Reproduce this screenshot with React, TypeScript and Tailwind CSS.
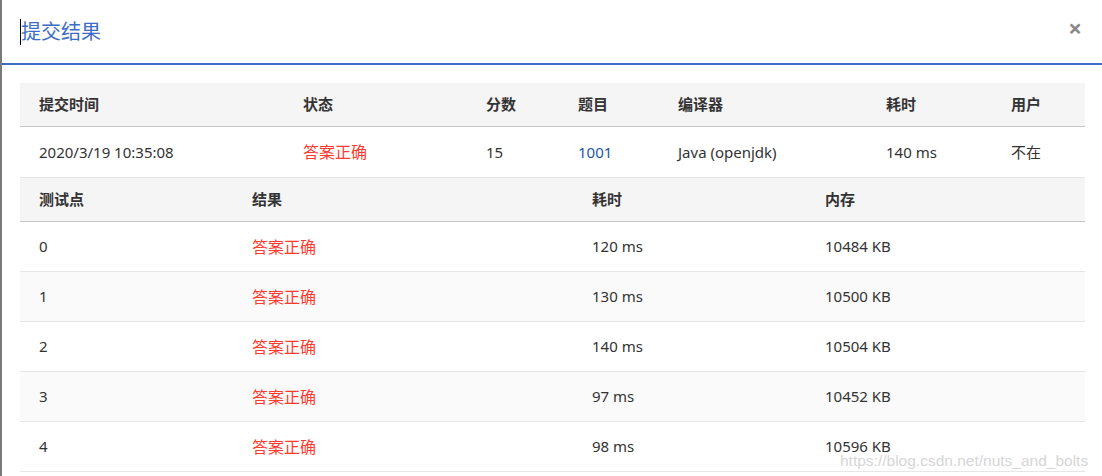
import React from 'react';

const font = { fontFamily: '"Noto Sans", "Noto Sans CJK SC", sans-serif' };

export default function App() {
  const cases = [
    { id: 0, time: '120 ms', mem: '10484 KB' },
    { id: 1, time: '130 ms', mem: '10500 KB' },
    { id: 2, time: '140 ms', mem: '10504 KB' },
    { id: 3, time: '97 ms', mem: '10452 KB' },
    { id: 4, time: '98 ms', mem: '10596 KB' },
  ];

  const outerCols = 'grid grid-cols-[264px_183px_92px_100px_208px_125px_1fr]';
  const innerCols = 'grid grid-cols-[213px_340px_233px_1fr]';

  return (
    <div className="relative w-[1102px] h-[476px] bg-white overflow-hidden border-l-2 border-[#7a7a7a] text-[15px] text-[#333]" style={font}>
      {/* Modal header */}
      <div className="h-[65px] flex items-center justify-between pl-[18px] pr-[20px] border-b-2 border-[#3d6cc4]">
        <div className="flex items-center">
          <span className="w-px h-[26px] bg-black" />
          <h2 className="text-[20px] text-[#3d6cc4] leading-none">提交结果</h2>
        </div>
        <span className="text-[24px] leading-none font-bold text-[#888] -mt-[8px]">×</span>
      </div>

      <div className="pl-[18px] pr-[17px] pt-[18px]">
        {/* Submission row */}
        <div className={`${outerCols} h-[44px] items-center bg-[#f5f5f5] border-b border-[#c6c6c6] font-bold`}>
          <div className="pl-[19px]">提交时间</div>
          <div className="pl-[19px]">状态</div>
          <div className="pl-[19px]">分数</div>
          <div className="pl-[19px]">题目</div>
          <div className="pl-[19px]">编译器</div>
          <div className="pl-[19px]">耗时</div>
          <div className="pl-[19px]">用户</div>
        </div>
        <div className={`${outerCols} h-[51px] items-center border-b border-[#e6e6e6]`}>
          <div className="pl-[19px]">2020/3/19 10:35:08</div>
          <div className="pl-[19px] text-[16px] text-[#ff3b30]">答案正确</div>
          <div className="pl-[19px]">15</div>
          <div className="pl-[19px] text-[#1a5aa6]">1001</div>
          <div className="pl-[19px]">Java (openjdk)</div>
          <div className="pl-[19px]">140 ms</div>
          <div className="pl-[19px]">不在</div>
        </div>

        {/* Test cases */}
        <div className={`${innerCols} h-[44px] items-center bg-[#f5f5f5] border-b border-[#c6c6c6] font-bold`}>
          <div className="pl-[19px]">测试点</div>
          <div className="pl-[19px]">结果</div>
          <div className="pl-[19px]">耗时</div>
          <div className="pl-[19px]">内存</div>
        </div>
        {cases.map((c) => (
          <div
            key={c.id}
            className={`${innerCols} h-[50px] items-center border-b border-[#e6e6e6] ${c.id % 2 === 1 ? 'bg-[#fafafa]' : 'bg-white'}`}
          >
            <div className="pl-[19px]">{c.id}</div>
            <div className="pl-[19px] text-[16px] text-[#ff3b30]">答案正确</div>
            <div className="pl-[19px]">{c.time}</div>
            <div className="pl-[19px]">{c.mem}</div>
          </div>
        ))}
      </div>

      {/* watermark */}
      <div className="absolute left-[838px] top-[453px] text-[15.5px] text-[#d6d6d6] leading-none" style={{ fontFamily: '"Liberation Sans", Arial, sans-serif' }}>
        https://blog.csdn.net/nuts_and_bolts
      </div>
    </div>
  );
}
